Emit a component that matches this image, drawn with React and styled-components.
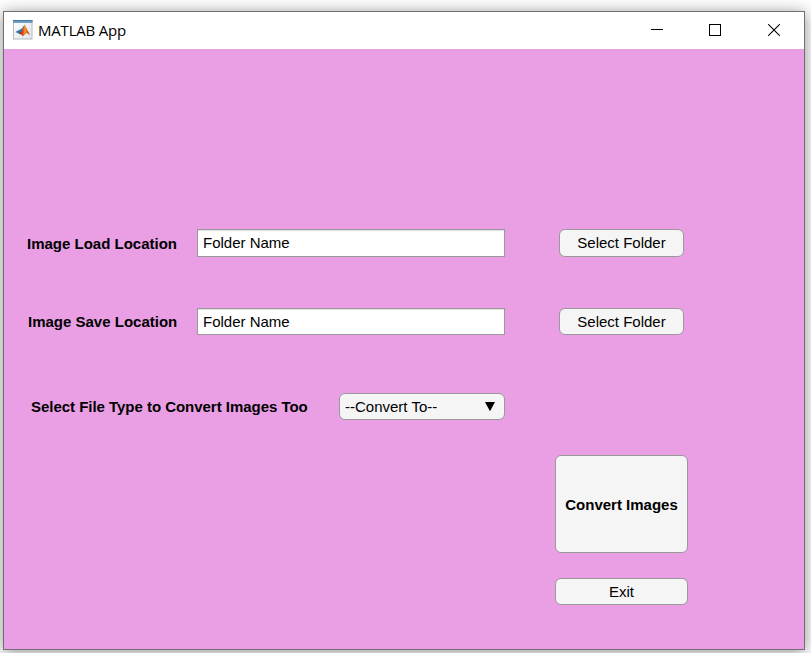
import React from "react";
import styled, { createGlobalStyle } from "styled-components";

const GlobalStyle = createGlobalStyle`
  *, *::before, *::after { box-sizing: border-box; }
  body { margin: 0; background: #fff; overflow: hidden; }
`;

const Desktop = styled.div`
  width: 811px;
  height: 653px;
  padding: 11px 6px 3px 3px;
  overflow: hidden;
  background: #fff;
  font-family: "Liberation Sans", Arial, sans-serif;
  font-size: 15px;
  color: #000;
`;

const Window = styled.main`
  width: 802px;
  height: 639px;
  display: flex;
  flex-direction: column;
  border: 1px solid #707070;
  box-shadow: 0 2px 15px rgba(0, 0, 0, 0.45);
`;

const TitleBar = styled.header`
  height: 37px;
  flex: none;
  display: flex;
  align-items: center;
  padding: 0 0 2px 9px;
  background: #fff;
`;

const Title = styled.h1`
  flex: 1;
  margin: 0 0 0 5px;
  font: 400 15px/20px "Open Sans", "Noto Sans", sans-serif;
  letter-spacing: ${(p) => p.$spacing};
`;

const Control = styled.button`
  width: 58.5px;
  height: 35px;
  padding: 0;
  border: 0;
  background: transparent;
  display: flex;
  align-items: center;
  justify-content: center;
`;

const Controls = styled.div`
  display: flex;
  margin-right: 1px;
`;

const Canvas = styled.section`
  flex: 1;
  padding: 180px 0 0 23px;
  background: #ea9fe5;
`;

const Row = styled.div`
  display: flex;
  align-items: center;
  height: ${(p) => p.$height}px;
  margin-bottom: ${(p) => p.$gap}px;
`;

const Label = styled.label`
  width: ${(p) => p.$width}px;
  padding-left: ${(p) => p.$indent || 0}px;
  padding-top: ${(p) => p.$drop || 0}px;
  flex: none;
  font-weight: 700;
  line-height: 18px;
  white-space: nowrap;
  letter-spacing: ${(p) => p.$spacing || "0"};
`;

const Field = styled.input`
  width: 308px;
  height: 100%;
  flex: none;
  margin: 0 54px 0 0;
  padding: 0 5px ${(p) => p.$lift || 0}px;
  border: 1px solid #999;
  border-radius: 0;
  outline: 0;
  background: #fff;
  box-shadow: inset 0 1px 1px #ddd;
  font: inherit;
  color: #000;
`;

const Button = styled.button`
  width: ${(p) => p.$width}px;
  height: ${(p) => p.$height}px;
  padding: 0 0 ${(p) => p.$lift || 0}px;
  border: 1px solid #999;
  border-radius: 6px;
  background: #f5f5f5;
  font: inherit;
  font-weight: ${(p) => (p.$bold ? 700 : 400)};
  color: #000;
`;

const DropDown = styled.button`
  width: 166px;
  height: 27px;
  display: flex;
  align-items: center;
  justify-content: space-between;
  padding: 0 8px 0 5px;
  border: 1px solid #999;
  border-radius: 6px;
  background: #f5f5f5;
  font: inherit;
  color: #000;
`;

const Actions = styled.div`
  display: flex;
  flex-direction: column;
  gap: 25px;
  margin-left: 528px;
`;

const MatlabIcon = () => (
  <svg width="20" height="20" viewBox="0 0 20 20">
    <defs>
      <linearGradient id="paper" x2="1" y2="1">
        <stop offset="0" stopColor="#fff" />
        <stop offset="1" stopColor="#dfe5e9" />
      </linearGradient>
      <linearGradient id="flame" x2="1">
        <stop offset="0" stopColor="#7c2018" />
        <stop offset="0.35" stopColor="#d9481c" />
        <stop offset="0.55" stopColor="#f5962a" />
        <stop offset="1" stopColor="#b92d12" />
      </linearGradient>
    </defs>
    <rect x="0.5" y="0.5" width="18.5" height="18.5" fill="url(#paper)" stroke="#b3bac0" />
    <rect width="19.5" height="3" fill="#6d9fc6" />
    <rect width="19.5" height="1" fill="#44769f" />
    <path d="M2.3 12 6.5 9.8 8.6 8.8 11.6 4.7 10.5 10.5 7.5 14.2 5.6 13.6Z" fill="#2f78b0" />
    <path d="M5.8 13.7 8.5 11 11.8 4.6 13.4 8 17 15 13.7 12.9 9.7 16.6 8.4 14.4Z" fill="url(#flame)" />
  </svg>
);

export default function App() {
  return (
    <Desktop>
      <GlobalStyle />
      <Window>
        <TitleBar>
          <MatlabIcon />
          <Title $spacing="-0.2px">MATLAB App</Title>
          <Controls>
            <Control aria-label="Minimize">
              <svg width="12" height="12" shapeRendering="crispEdges">
                <path d="M0 5.5H12" stroke="#000" />
              </svg>
            </Control>
            <Control aria-label="Maximize">
              <svg width="12" height="12" shapeRendering="crispEdges">
                <path d="M.5 .5H11.5V11.5H.5Z" fill="none" stroke="#000" />
              </svg>
            </Control>
            <Control aria-label="Close">
              <svg width="12" height="12">
                <path d="M.2 .2 11.8 11.8M11.8 .2 .2 11.8" stroke="#000" strokeWidth="1.1" />
              </svg>
            </Control>
          </Controls>
        </TitleBar>
        <Canvas>
          <Row $height={28} $gap={51}>
            <Label $width={170} $drop={1} htmlFor="load">Image Load Location</Label>
            <Field id="load" defaultValue="Folder Name" $lift={2} />
            <Button $width={125} $height={28} $lift={2}>Select Folder</Button>
          </Row>
          <Row $height={27} $gap={58}>
            <Label $width={170} $indent={1} htmlFor="save">Image Save Location</Label>
            <Field id="save" defaultValue="Folder Name" />
            <Button $width={125} $height={27}>Select Folder</Button>
          </Row>
          <Row $height={27} $gap={35}>
            <Label $width={312} $indent={4} $spacing="-0.03px">Select File Type to Convert Images Too</Label>
            <DropDown>
              <span>--Convert To--</span>
              <svg width="12" height="11">
                <path d="M1 1H11L6 10.3Z" fill="#000" />
              </svg>
            </DropDown>
          </Row>
          <Actions>
            <Button $width={133} $height={98} $bold>Convert Images</Button>
            <Button $width={133} $height={27}>Exit</Button>
          </Actions>
        </Canvas>
      </Window>
    </Desktop>
  );
}
